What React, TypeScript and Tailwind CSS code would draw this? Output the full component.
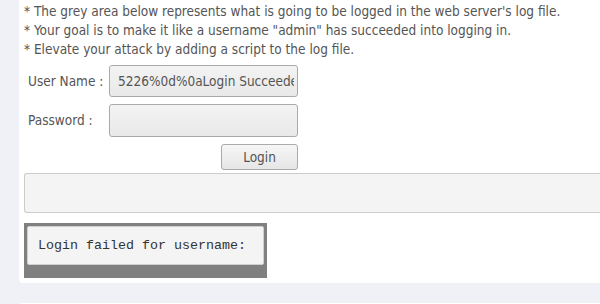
import React from 'react';

const LogDemo: React.FC = () => {
  return (
    <div className="w-[600px] h-[304px] overflow-hidden bg-[#f0f1f6] pl-[19px] font-['DejaVu_Sans_Condensed','DejaVu_Sans',sans-serif] text-[13.5px] text-[#555]">
      <div className="h-[283px] bg-white rounded-bl-[4px] pl-[5px] pt-[2px]">
        {/* instructions */}
        <div className="leading-[19px]">
          <p>* The grey area below represents what is going to be logged in the web server's log file.</p>
          <p>* Your goal is to make it like a username "admin" has succeeded into logging in.</p>
          <p>* Elevate your attack by adding a script to the log file.</p>
        </div>

        {/* login form */}
        <div className="mt-[6px] flex flex-col gap-[7px] w-[274px]">
          <div className="flex items-center">
            <span className="w-[85px] pl-[4px]">User Name :</span>
            <div className="w-[189px] h-[32px] border border-[#aaa] rounded-[3px] bg-gradient-to-b from-[#f3f3f3] to-[#e9e9e9] pl-[8px] pr-[3px] flex items-center">
              <span className="block overflow-hidden whitespace-nowrap">5226%0d%0aLogin Succeeded for username: admin</span>
            </div>
          </div>
          <div className="flex items-center">
            <span className="w-[85px] pl-[4px]">Password :</span>
            <div className="w-[189px] h-[33px] border border-[#aaa] rounded-[3px] bg-gradient-to-b from-[#f3f3f3] to-[#e9e9e9]" />
          </div>
          <div className="flex justify-end">
            <button className="w-[77px] h-[26px] border border-[#aaa] rounded-[3px] bg-gradient-to-b from-[#f6f6f6] to-[#e6e6e6] text-[#555] text-[13.5px]">
              Login
            </button>
          </div>
        </div>

        {/* log output */}
        <div className="mt-[3px] h-[40px] w-[590px] border border-r-0 border-[#ccc] rounded-l-[3px] bg-[#f4f4f4]" />

        <div className="mt-[10px] w-[243px] h-[55px] bg-[#808080] p-[3px] pb-[13px]">
          <div className="h-full border border-[#d0d0d0] rounded-[2px] bg-[#f4f4f4] pl-[10px] flex items-center font-['Liberation_Mono','Courier_New',monospace] text-[13.33px] text-[#333]">
            Login failed for username:
          </div>
        </div>
      </div>
      <div className="mt-[20px] h-[10px] bg-white rounded-tl-[4px]" />
    </div>
  );
};

export default function App() {
  return <LogDemo />;
}
